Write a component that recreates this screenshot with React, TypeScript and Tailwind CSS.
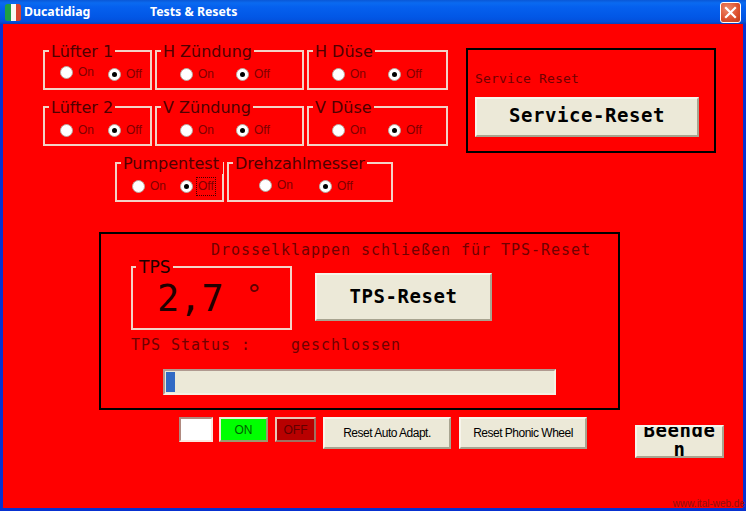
import React from "react";

const sans = "font-['Noto_Sans','Liberation_Sans',sans-serif]";
const arial = "font-['Liberation_Sans',Arial,sans-serif]";
const mono = "font-['DejaVu_Sans_Mono','Liberation_Mono',monospace]";
const verd = "font-['DejaVu_Sans','Liberation_Sans',sans-serif]";
const btn =
  "flex items-center justify-center overflow-hidden bg-[#ece9d8] border-2 border-t-[#f7f5ec] border-l-[#f7f5ec] border-r-[#a8a490] border-b-[#a8a490]";

function Radio({ checked, pitch, lift, focus }: { checked?: boolean; pitch: number; lift?: string; focus?: boolean }) {
  return (
    <div className={`flex items-center shrink-0 ${lift ?? ""}`} style={{ width: pitch }}>
      <div className="w-[13px] h-[13px] rounded-full bg-white border border-[#b9a8a0] flex items-center justify-center shrink-0">
        {checked && <div className="w-[5px] h-[5px] rounded-full bg-black" />}
      </div>
      <span
        className={`ml-[5px] text-[12px] leading-[15px] text-[#800000] ${arial} ${
          focus ? "outline-1 outline-dotted outline-[#400000] outline-offset-[1px]" : ""
        }`}
      >
        {checked ? "Off" : "On"}
      </span>
    </div>
  );
}

function Group({
  title,
  width,
  pad,
  pitch,
  lift,
  focus,
  legendClass,
}: {
  title: string;
  width: number;
  pad: number;
  pitch: number;
  lift?: string;
  focus?: boolean;
  legendClass?: string;
}) {
  return (
    <div
      className="relative h-[40px] border-2 border-[#f3d3c6] pt-[15px] flex items-start shrink-0"
      style={{ width, paddingLeft: pad }}
    >
      <div
        className={`absolute left-[4px] -top-[9px] h-[19px] bg-[#ff0000] px-[2px] text-[16px] leading-[18px] whitespace-nowrap text-[#500000] ${verd} ${legendClass ?? ""}`}
      >
        {title}
      </div>
      <Radio pitch={pitch} lift={lift} />
      <Radio pitch={pitch} checked focus={focus} />
    </div>
  );
}

function Flag() {
  return (
    <svg width="16" height="17" viewBox="0 0 16 17" className="shrink-0">
      <defs>
        <clipPath id="flagclip">
          <rect x="0" y="0" width="16" height="17" rx="2.5" />
        </clipPath>
      </defs>
      <g clipPath="url(#flagclip)">
        <rect x="0" width="6" height="17" fill="#1fa045" />
        <rect x="6" width="5" height="17" fill="#f8f8f4" />
        <rect x="11" width="5" height="17" fill="#d8432f" />
      </g>
    </svg>
  );
}

function CloseBtn() {
  return (
    <div className="w-[21px] h-[21px] rounded-[3px] border border-white bg-[radial-gradient(circle_at_35%_30%,#ee8a6c,#dc4f2c_60%,#c23a18)] flex items-center justify-center">
      <svg width="13" height="13" viewBox="0 0 13 13">
        <path d="M2 2 L11 11 M11 2 L2 11" stroke="#ffffff" strokeWidth="2.2" strokeLinecap="square" />
      </svg>
    </div>
  );
}

export default function App() {
  return (
    <div className={`relative w-[746px] h-[511px] overflow-hidden flex flex-col bg-[#0831d0] ${sans}`}>
      {/* Title bar */}
      <div className="h-[24px] shrink-0 flex items-center pl-[5px] pr-[5px] bg-[linear-gradient(to_bottom,#0a57d6_0%,#0a6af0_12%,#0560ee_30%,#0257e6_70%,#0350dc_90%,#0a3fb8_100%)]">
        <Flag />
        <span className="ml-[3px] w-[126px] text-[12.3px] leading-[16px] font-bold text-white">Ducatidiag</span>
        <span className="text-[12.3px] leading-[16px] font-bold text-white flex-1">Tests &amp; Resets</span>
        <CloseBtn />
      </div>

      {/* Client area */}
      <div className="flex-1 mx-[3px] mb-[3px] bg-[#ff0000] flex flex-col min-h-0">
        <div className="flex items-start">
          <div className="flex flex-col pt-[26px] pl-[40px] w-[463px] shrink-0">
            <div className="flex gap-[3px]">
              <Group title="Lüfter 1" width={109} pad={15} pitch={48} lift="-mt-[2px]" />
              <Group title="H Zündung" width={149} pad={23} pitch={56} />
              <Group title="H Düse" width={141} pad={23} pitch={56} />
            </div>
            <div className="flex gap-[3px] mt-[16px]">
              <Group title="Lüfter 2" width={109} pad={15} pitch={48} />
              <Group title="V Zündung" width={149} pad={23} pitch={56} />
              <Group title="V Düse" width={141} pad={23} pitch={56} />
            </div>
            <div className="flex gap-[3px] mt-[16px] ml-[72px]">
              <Group title="Pumpentest" width={109} pad={15} pitch={48} focus legendClass="pr-[4px]" />
              <Group title="Drehzahlmesser" width={166} pad={30} pitch={60} lift="-mt-[1px]" />
            </div>
          </div>

          {/* Service box */}
          <div className="mt-[24px] w-[250px] h-[105px] border-2 border-black pl-[7px] pt-[21px] flex flex-col">
            <div className={`text-[13px] leading-[16px] tracking-[0.17px] text-[#700000] ${mono}`}>Service Reset</div>
            <div className={`mt-[10px] w-[224px] h-[40px] pb-[3px] ${btn}`}>
              <span className={`text-[19px] font-bold tracking-[0.55px] text-black ${mono}`}>Service-Reset</span>
            </div>
          </div>
        </div>

        {/* TPS box */}
        <div className="mt-[30px] ml-[96px] w-[521px] h-[178px] border-2 border-black flex flex-col shrink-0">
          <div className={`pt-[8px] pl-[110px] text-[15px] leading-[16px] tracking-[0.97px] whitespace-nowrap text-[#700000] ${mono}`}>
            Drosselklappen schließen für TPS-Reset
          </div>
          <div className="flex items-start mt-[8px] ml-[30px]">
            <div className="relative w-[161px] h-[64px] border-2 border-[#f3d3c6] shrink-0 pl-[24px] pt-[6px]">
              <div className={`absolute left-[3px] -top-[10px] h-[18px] bg-[#ff0000] px-[3px] text-[17px] leading-[18px] text-[#200000] ${verd}`}>
                TPS
              </div>
              <div className={`text-[37px] leading-[42px] whitespace-pre text-[#200000] ${mono}`}>
                2,7 <span className="text-[27px] align-[7px] text-[#600000]">°</span>
              </div>
            </div>
            <div className={`ml-[23px] mt-[7px] w-[177px] h-[48px] pb-[2px] ${btn}`}>
              <span className={`text-[19px] font-bold tracking-[0.55px] text-black ${mono}`}>TPS-Reset</span>
            </div>
          </div>
          <div className={`mt-[7px] ml-[30px] flex text-[15px] leading-[16px] tracking-[0.97px] whitespace-pre text-[#700000] ${mono}`}>
            <span className="w-[160px]">TPS Status :</span>
            <span>geschlossen</span>
          </div>
          <div className="mt-[16px] ml-[62px] w-[393px] h-[26px] bg-[#ece9d8] border-2 border-t-[#b09a90] border-l-[#b09a90] border-r-[#f5f0e4] border-b-[#f5f0e4] p-[1px]">
            <div className="w-[9px] h-full bg-[#316ac5]" />
          </div>
        </div>

        {/* Bottom row */}
        <div className="mt-[7px] ml-[176px] flex items-start">
          <div className="w-[34px] h-[25px] bg-white border-2 border-t-[#b08a80] border-l-[#b08a80] border-r-[#fbe8e0] border-b-[#fbe8e0]" />
          <div className={`ml-[6px] w-[49px] h-[25px] bg-[#00ff00] border-2 border-t-[#f0e8d8] border-l-[#f0e8d8] border-r-[#9a9a70] border-b-[#9a9a70] flex items-center justify-center text-[12px] text-[#006000] ${arial}`}>
            ON
          </div>
          <div className={`ml-[7px] w-[41px] h-[25px] bg-[#b80000] border-2 border-t-[#e8c8b8] border-l-[#e8c8b8] border-r-[#a07060] border-b-[#a07060] flex items-center justify-center text-[12px] text-[#600000] ${arial}`}>
            OFF
          </div>
          <div className={`ml-[7px] w-[128px] h-[32px] text-[12px] tracking-[-0.5px] text-black ${btn} ${arial}`}>Reset Auto Adapt.</div>
          <div className={`ml-[8px] w-[128px] h-[32px] text-[12px] tracking-[-0.5px] text-black ${btn} ${arial}`}>Reset Phonic Wheel</div>
          <div className={`ml-[48px] mt-[8px] w-[89px] h-[33px] ${btn}`}>
            <div className={`w-[76px] shrink-0 mb-[4px] text-center break-all text-[19px] font-bold tracking-[0.55px] leading-[19px] text-black ${mono}`}>
              Beenden
            </div>
          </div>
        </div>
      </div>

      <div className={`absolute right-[1px] bottom-[1px] text-[10px] leading-[12px] text-[#8c1010] ${arial}`}>www.ital-web.de</div>
    </div>
  );
}
